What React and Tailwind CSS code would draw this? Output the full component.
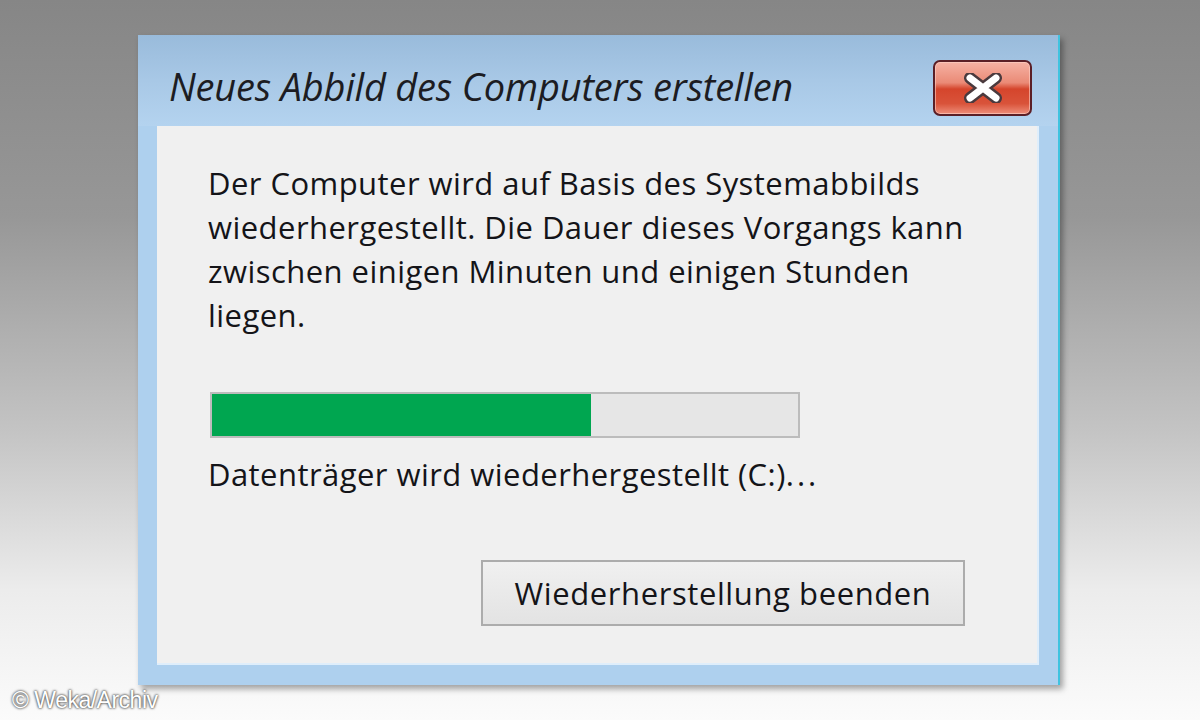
import React from 'react';

const CloseButton = () => (
  <div className="relative w-[99px] h-[56px] rounded-[7px] border-2 border-[#5b1f26] bg-[linear-gradient(to_bottom,#f6b2a4_0%,#ea8a76_40%,#d5452c_52%,#d9533a_80%,#ee8e7a_100%)] shadow-[inset_0_0_0_1px_rgba(255,210,200,0.6)] flex items-center justify-center">
    <svg width="44" height="30" viewBox="0 0 44 30">
      <path d="M9 5 L35 25 M35 5 L9 25" stroke="#4a3a3e" strokeWidth="12" strokeLinecap="round" />
      <path d="M9 5 L35 25 M35 5 L9 25" stroke="#ffffff" strokeWidth="7" strokeLinecap="round" />
    </svg>
  </div>
);

export default function App() {
  return (
    <div className="relative w-[1200px] h-[720px] overflow-hidden bg-[linear-gradient(to_bottom,#868686_0%,#979797_30%,#c4c4c4_60%,#ececec_82%,#fbfbfb_100%)] font-['Open_Sans',sans-serif]">
      <div className="pl-[138px] pt-[35px]">
        {/* window */}
        <div className="w-[922px] h-[650px] flex flex-col border-r-2 border-r-[#3fc3df] shadow-[3px_4px_6px_rgba(0,0,0,0.35)] bg-[#aed0ee]">
          {/* title bar */}
          <div className="h-[91px] flex items-start justify-between pl-[31px] pr-[26px] pt-[25px] bg-[linear-gradient(to_bottom,#99bbdb_0%,#a8c8e6_50%,#b4d3ef_100%)]">
            <span className="italic text-[38px] leading-[52px] text-[#1c1c22] tracking-[-0.2px]">
              Neues Abbild des Computers erstellen
            </span>
            <CloseButton />
          </div>
          {/* frame */}
          <div className="flex-1 flex px-[19px] pb-[20px]">
            <div className="flex-1 bg-[#f0f0f0] border-r-2 border-b-2 border-[#dfeefb] pl-[51px] pt-[35px] text-[#141418] text-[31px] tracking-[0.45px]">
              <p className="leading-[44px]">
                Der Computer wird auf Basis des Systemabbilds
                <br />
                wiederhergestellt. Die Dauer dieses Vorgangs kann
                <br />
                zwischen einigen Minuten und einigen Stunden
                <br />
                liegen.
              </p>
              <div className="mt-[55px] ml-[2px] w-[590px] h-[46px] border-2 border-[#bcbcbc] bg-[#e6e6e6] flex">
                <div className="w-[379px] h-full bg-[#00a650]" />
              </div>
              <p className="mt-[14px] leading-[44px]">
                Datenträger wird wiederhergestellt (C:)<span className="tracking-[3px]">...</span>
              </p>
              <div className="flex pr-[72px] justify-end mt-[64px]">
                <div className="w-[484px] h-[66px] border-2 border-[#acacac] bg-[linear-gradient(to_bottom,#f0f0f0,#e3e3e3)] flex items-center justify-center text-[31px] tracking-[0.6px] text-[#141418]">
                  Wiederherstellung beenden
                </div>
              </div>
            </div>
          </div>
        </div>
      </div>
      <span className="absolute left-[12px] top-[683px] text-[23px] text-white font-['Liberation_Sans',sans-serif] tracking-[-0.5px] [text-shadow:0_0_3px_#444,0_0_2px_#444]">
        © Weka/Archiv
      </span>
    </div>
  );
}
